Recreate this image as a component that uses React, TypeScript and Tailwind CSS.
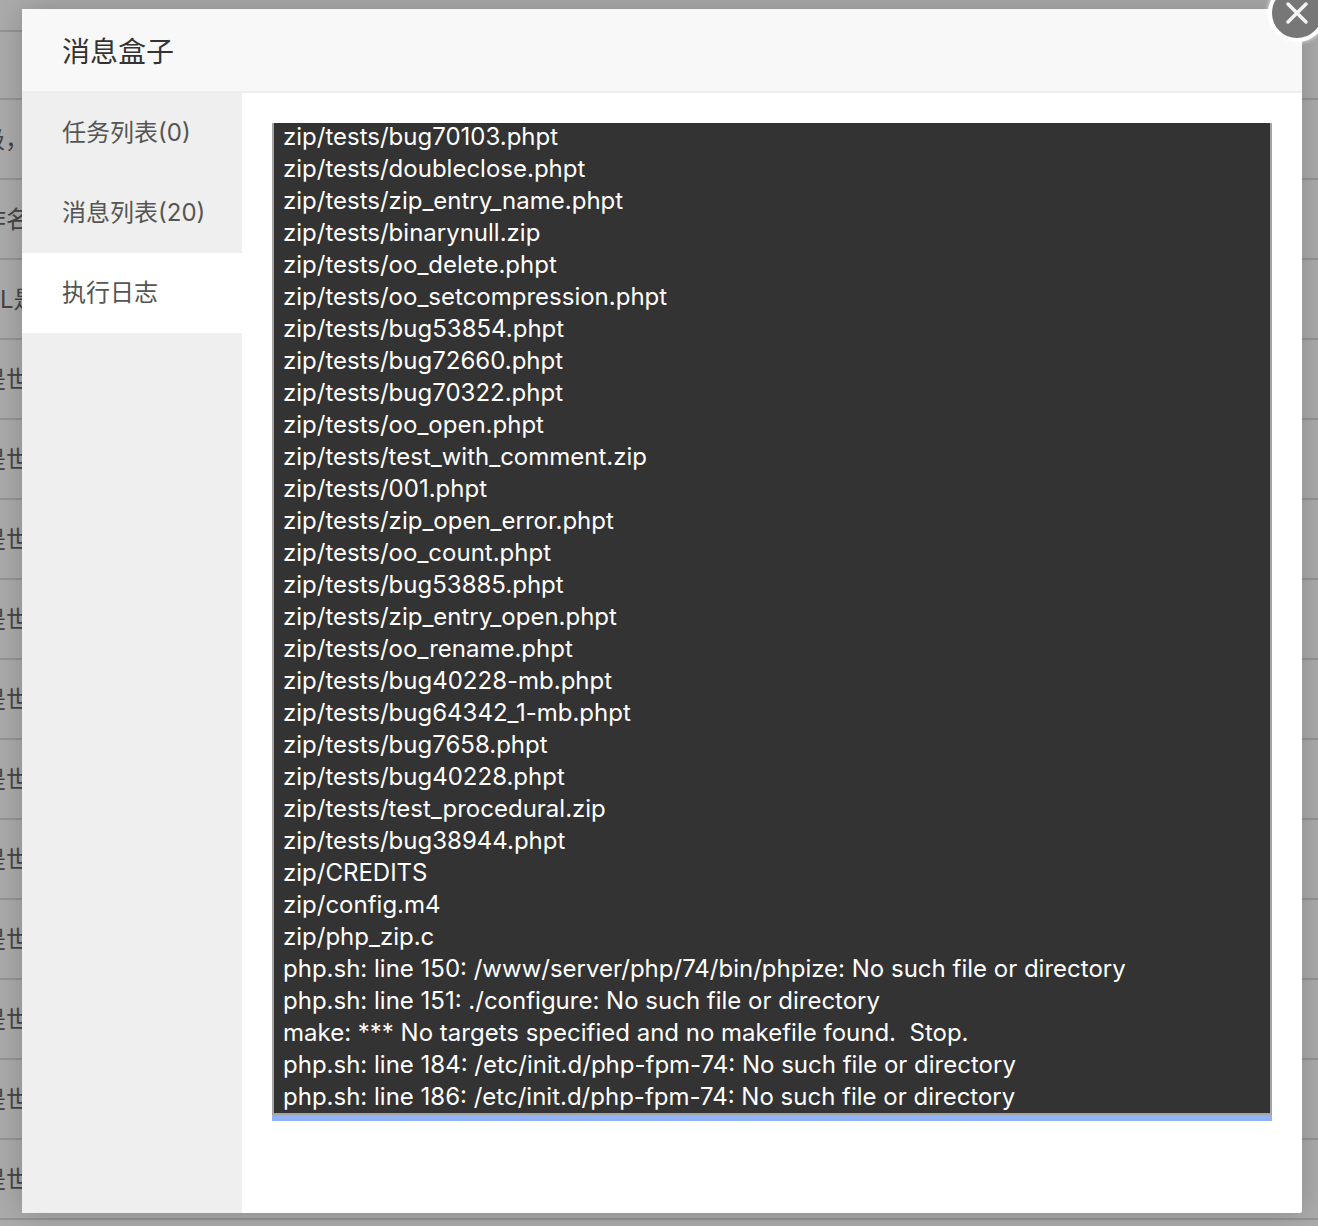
import React from 'react';

const logLines = [
    'zip/tests/bug70103.phpt',
    'zip/tests/doubleclose.phpt',
    'zip/tests/zip_entry_name.phpt',
    'zip/tests/binarynull.zip',
    'zip/tests/oo_delete.phpt',
    'zip/tests/oo_setcompression.phpt',
    'zip/tests/bug53854.phpt',
    'zip/tests/bug72660.phpt',
    'zip/tests/bug70322.phpt',
    'zip/tests/oo_open.phpt',
    'zip/tests/test_with_comment.zip',
    'zip/tests/001.phpt',
    'zip/tests/zip_open_error.phpt',
    'zip/tests/oo_count.phpt',
    'zip/tests/bug53885.phpt',
    'zip/tests/zip_entry_open.phpt',
    'zip/tests/oo_rename.phpt',
    'zip/tests/bug40228-mb.phpt',
    'zip/tests/bug64342_1-mb.phpt',
    'zip/tests/bug7658.phpt',
    'zip/tests/bug40228.phpt',
    'zip/tests/test_procedural.zip',
    'zip/tests/bug38944.phpt',
    'zip/CREDITS',
    'zip/config.m4',
    'zip/php_zip.c',
    'php.sh: line 150: /www/server/php/74/bin/phpize: No such file or directory',
    'php.sh: line 151: ./configure: No such file or directory',
    'make: *** No targets specified and no makefile found.  Stop.',
    'php.sh: line 184: /etc/init.d/php-fpm-74: No such file or directory',
    'php.sh: line 186: /etc/init.d/php-fpm-74: No such file or directory',
];

// table rows behind the overlay, only their left ends show past the modal
const bgRows = [
    { text: '级，', cls: '-ml-[19px]' },
    { text: '作名', cls: '-ml-[18px]' },
    { text: 'L是', cls: 'ml-0' },
    ...Array.from({ length: 12 }, () => ({ text: '是世', cls: '-ml-[18px]' })),
];

const App: React.FC = () => {
    return (
        <div className="relative h-[1226px] w-[1318px] overflow-hidden bg-[#ababab] font-['Inter','Noto_Sans_CJK_SC',sans-serif]">
            <div className="h-[98px] pt-[30px]">
                <div className="h-[2px] bg-[#949494]" />
            </div>
            {bgRows.map((row, i) => (
                <div key={i} className="flex h-[80px] items-center border-t-2 border-[#949494] pt-[2px] text-[24px] whitespace-nowrap text-[#444]">
                    <span className={row.cls}>{row.text}</span>
                </div>
            ))}
            <div className="h-[8px] border-t-2 border-[#949494]" />

            <div className="absolute left-[22px] top-[9px] flex h-[1204px] w-[1280px] flex-col rounded-[2px] bg-white shadow-[0_0_30px_rgba(0,0,0,0.2)]">
                <div className="flex h-[84px] shrink-0 items-center border-b-2 border-[#eeeeee] bg-[#f8f8f8] pl-[40px] pt-[4px] text-[28px] text-[#333]">
                    消息盒子
                </div>
                <div className="flex min-h-0 flex-1">
                    <div className="w-[220px] shrink-0 bg-[#efefef] text-[24px] text-[#555]">
                        <div className="flex h-[80px] items-center pl-[40px]">任务列表(0)</div>
                        <div className="flex h-[80px] items-center pl-[40px]">消息列表(20)</div>
                        <div className="flex h-[80px] items-center bg-white pl-[40px]">执行日志</div>
                    </div>
                    <div className="min-w-0 flex-1 pl-[30px] pt-[30px]">
                        <div className="h-[998px] w-[1000px] border-b-[6px] border-[#8fb3f5]">
                            <div className="flex h-full flex-col justify-end overflow-hidden border-x-2 border-b-2 border-[#a5a5a5] bg-[#333333] pl-[9px] text-[24px] leading-[32px] text-white">
                                {logLines.map((line, i) => (
                                    <div key={i} className="shrink-0 whitespace-pre">{line}</div>
                                ))}
                            </div>
                        </div>
                    </div>
                </div>
            </div>

            <button className="absolute left-[1268px] top-[-16px] flex h-[58px] w-[58px] items-center justify-center rounded-full border-4 border-white bg-[#777777] shadow-[0_0_4px_rgba(255,255,255,0.9)]">
                <svg width="24" height="24" viewBox="0 0 24 24" fill="none" stroke="#f4f4f4" strokeWidth="3.5" strokeLinecap="round">
                    <path d="M3 3 L21 21 M21 3 L3 21" />
                </svg>
            </button>
        </div>
    );
};

export default App;
